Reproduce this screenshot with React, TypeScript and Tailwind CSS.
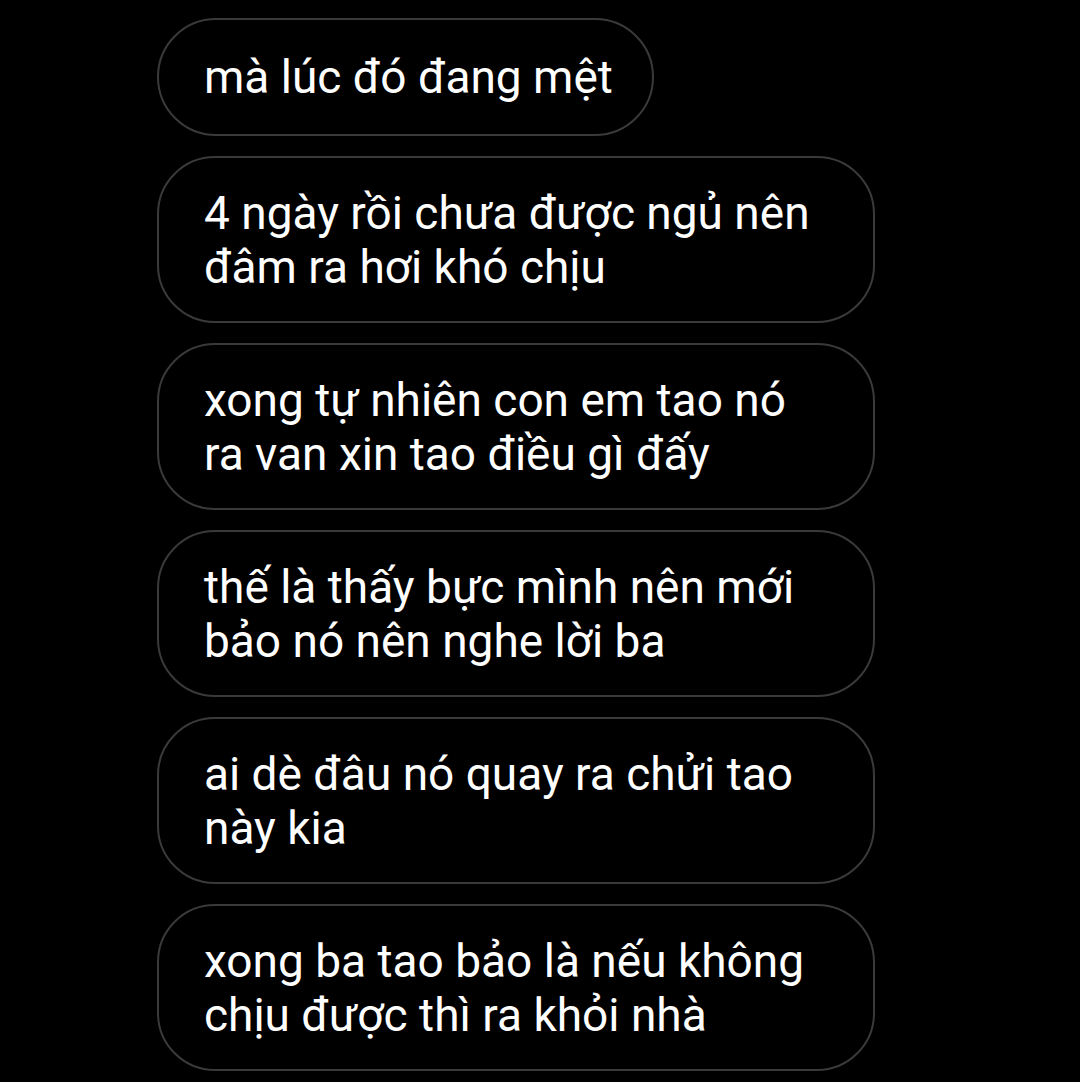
const messages: string[][] = [
  ["mà lúc đó đang mệt"],
  ["4 ngày rồi chưa được ngủ nên", "đâm ra hơi khó chịu"],
  ["xong tự nhiên con em tao nó", "ra van xin tao điều gì đấy"],
  ["thế là thấy bực mình nên mới", "bảo nó nên nghe lời ba"],
  ["ai dè đâu nó quay ra chửi tao", "này kia"],
  ["xong ba tao bảo là nếu không", "chịu được thì ra khỏi nhà"],
];

export default function App() {
  return (
    <div
      className="min-h-[1082px] w-[1080px] overflow-hidden bg-black pl-[157px] pt-[18px]"
      style={{ fontFamily: "Roboto, 'Noto Sans', sans-serif" }}
    >
      <div className="flex flex-col items-start gap-5">
        {messages.map((lines, i) =>
          lines.length === 1 ? (
            <div
              key={i}
              className="flex h-[118px] items-center rounded-full border-2 border-[#3a3a3a] pl-[45px] pr-[39px] text-[46px] leading-[54px] text-white"
            >
              {lines[0]}
            </div>
          ) : (
            <div
              key={i}
              className="flex h-[167px] w-[718px] flex-col justify-center rounded-[58px] border-2 border-[#3a3a3a] pl-[45px] pr-[40px] text-[46px] leading-[54px] text-white"
            >
              {lines.map((l, j) => (
                <div key={j} className="whitespace-nowrap">
                  {l}
                </div>
              ))}
            </div>
          )
        )}
      </div>
    </div>
  );
}
